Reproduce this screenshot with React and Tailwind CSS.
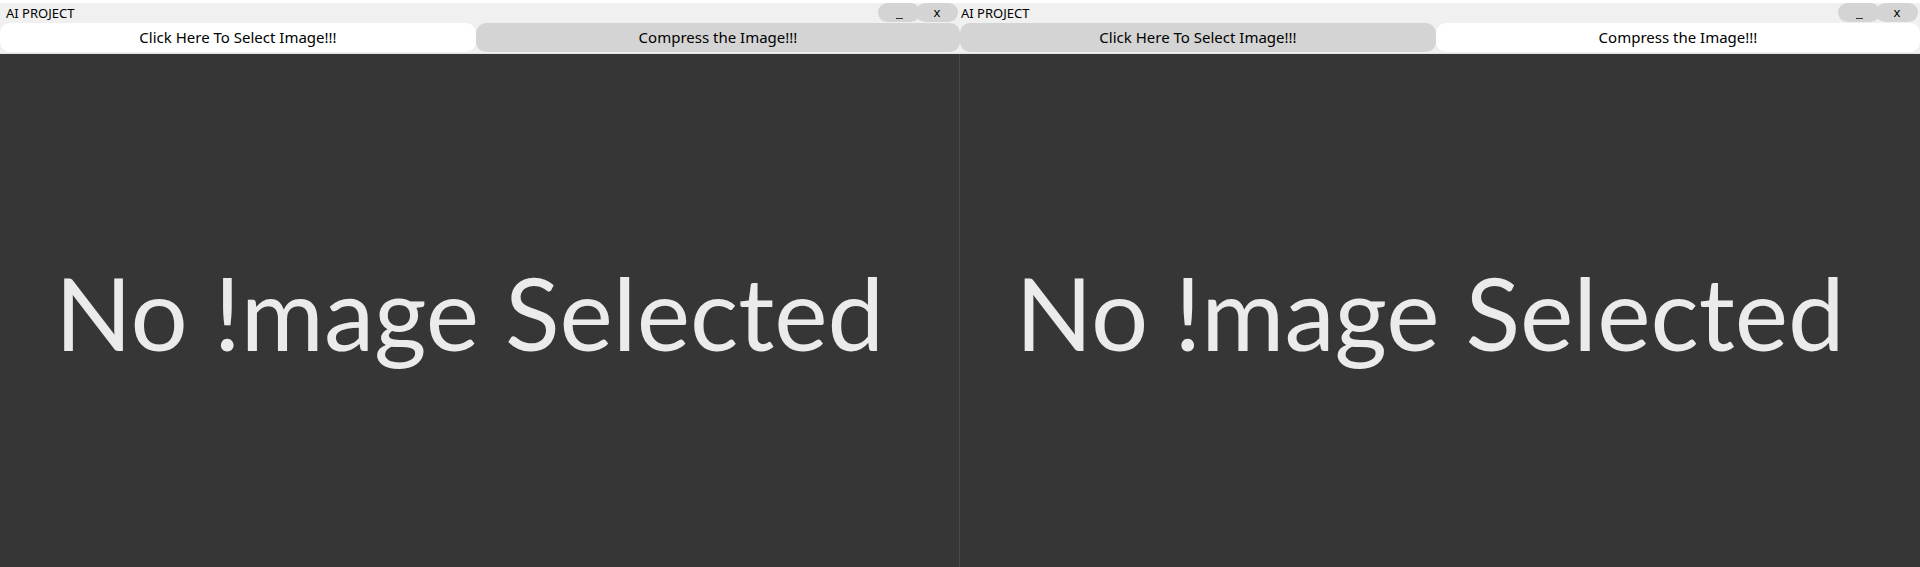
import React from 'react'

function WindowPane({ selectActive, divider, titlePad }) {
  const on = 'bg-white'
  const off = 'bg-[#d4d4d4]'
  return (
    <div className="flex flex-col w-[960px] h-[567px] bg-[#f0f0f0]">
      {/* title bar */}
      <div className="flex items-end justify-between h-[22px] border-t-[3px] border-white bg-[#f0f0f0]">
        <span className={`${titlePad} pb-[2px] text-[13px] leading-none text-black`} style={{ fontFamily: '"Noto Sans", sans-serif' }}>
          AI PROJECT
        </span>
        <div className="flex pr-[2px]">
          <div className="flex items-end justify-center w-[42px] h-[19px] rounded-full bg-[#d4d4d4] pb-[3px]">
            <span className="block w-[7px] h-[1px] bg-[#333]" />
          </div>
          <div className="flex items-center justify-center w-[42px] h-[19px] -ml-[4px] rounded-full bg-[#d4d4d4] text-[13px] leading-none text-black" style={{ fontFamily: '"Noto Sans", sans-serif' }}>
            x
          </div>
        </div>
      </div>
      {/* buttons */}
      <div className="flex h-[31px] py-[1px]" style={{ fontFamily: '"Noto Sans", sans-serif' }}>
        <button className={`w-[476px] rounded-[10px] text-[15px] text-black ${selectActive ? on : off}`}>
          Click Here To Select Image!!!
        </button>
        <button className={`flex-1 rounded-[10px] text-[15px] text-black ${selectActive ? off : on}`}>
          Compress the Image!!!
        </button>
      </div>
      <div className="h-[1px] bg-[#e4e4e4]" />
      {/* image area */}
      <div className={`flex-1 flex items-center justify-center bg-[#363636] ${divider ? 'border-r border-[#4a4a4a]' : ''}`}>
        <span className="pr-[20px] pt-[4px] text-[101px] leading-none text-[#ebebeb]" style={{ fontFamily: 'Lato, sans-serif' }}>
          No !mage Selected
        </span>
      </div>
    </div>
  )
}

export default function App() {
  return (
    <div className="flex w-[1920px] h-[567px] overflow-hidden">
      <WindowPane selectActive divider titlePad="pl-[6px]" />
      <WindowPane selectActive={false} titlePad="pl-[1px]" />
    </div>
  )
}
